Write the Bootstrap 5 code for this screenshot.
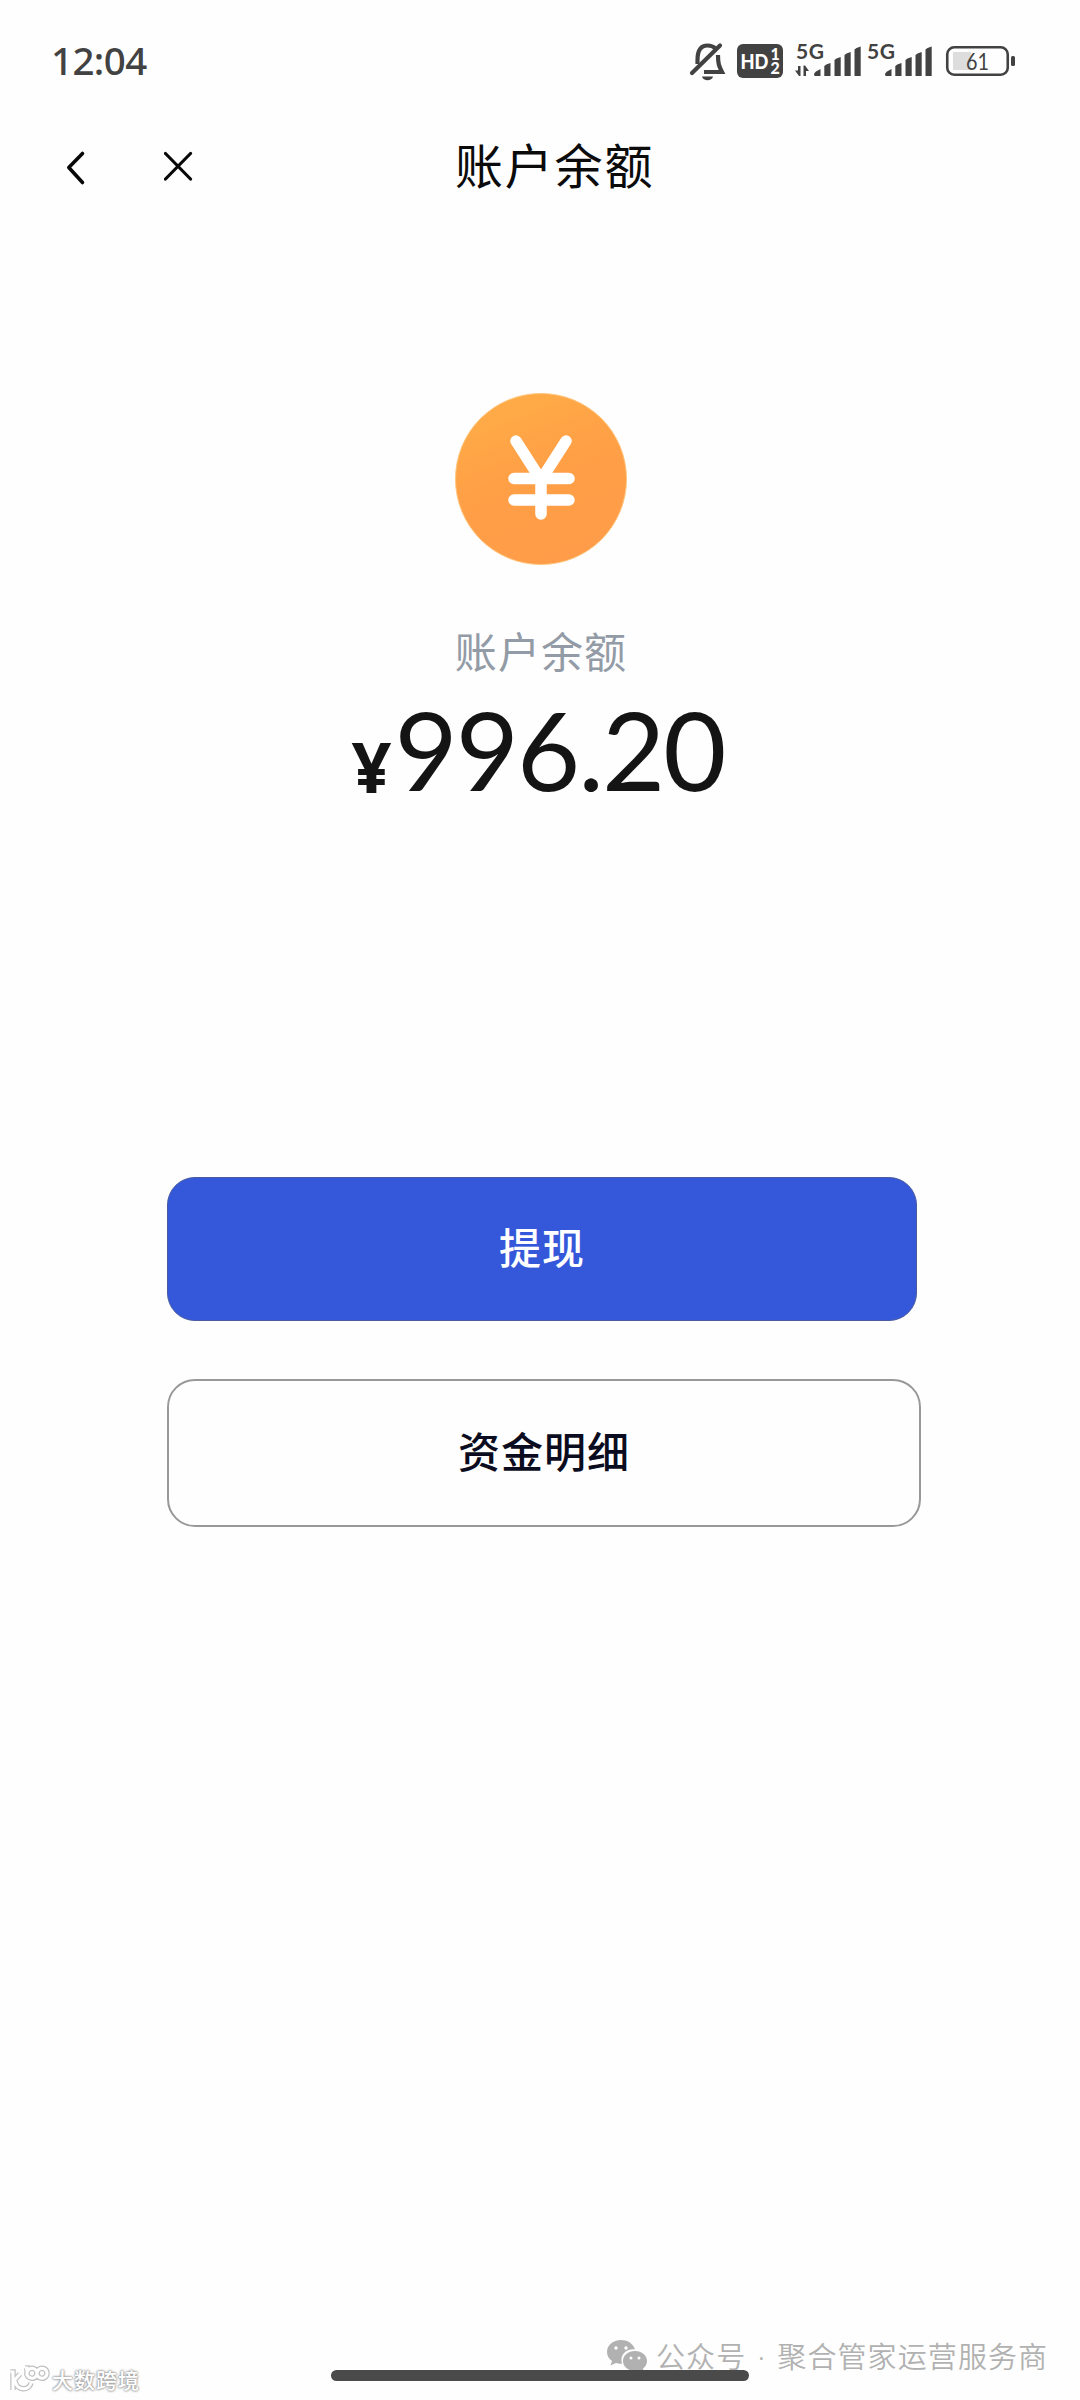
<!DOCTYPE html>
<html lang="zh-CN">
<head>
<meta charset="utf-8">
<meta name="viewport" content="width=device-width, initial-scale=1">
<title>账户余额</title>
<link href="https://cdn.jsdelivr.net/npm/bootstrap@5.3.0/dist/css/bootstrap.min.css" rel="stylesheet">
<style>
body{font-family:"Noto Sans CJK SC",sans-serif;background:#fefefe;color:#0d0d0d}
.phone{width:1080px;height:2400px;overflow:hidden}
.status{height:122px;padding:0 64px 0 51px;color:#424242}
.clock{font:500 38.5px/1 "Noto Sans",sans-serif;letter-spacing:-.6px;padding-bottom:2px}
.status svg,.topbar svg,.coin{display:block;flex:none}
.topbar{height:90px;padding-left:60px}
.topbar .btn{border-radius:0}
.close-btn{margin-left:70px}
.page-title{font-size:48px;line-height:60px;letter-spacing:1.8px;margin-left:257px;padding-bottom:8px;color:#0b0b0b;font-weight:400}
.coin{margin:181px 0 0 1px}
.label{font-size:42px;line-height:60px;letter-spacing:1.1px;margin:55px 0 0 2px;color:#929ba6}
.amount{height:110px;margin-top:14px;color:#141414;font-family:Lato,sans-serif;margin-right:4px}
.amount .yen{font:700 70px/1 "Noto Sans",sans-serif;margin-right:3px;padding-bottom:2px;align-self:flex-end;line-height:72px}
.amount .num{font-size:109px;line-height:110px;letter-spacing:-2px}
.actions{margin:373px 159px 0 167px}
.actions .btn{border-radius:28px;font-size:42px;font-weight:500;line-height:60px;letter-spacing:1px;padding:0 0 6px}
.btn-draw{width:750px;height:144px;background:#3558da;border:1px solid #4a5c9e;color:#fff}
.btn-list{width:754px;height:148px;margin-top:58px;border:2px solid #999;color:#0b0c20;background:#fefefe}
.account{left:606px;top:2335px;color:#b1b1b1;font-size:29px;line-height:40px;letter-spacing:1.1px;white-space:pre}
.acct{font-weight:350}
.dot{display:inline-block;width:31px;text-align:center;font-family:"Noto Sans",sans-serif}
.homebar{left:331px;top:2370px;width:418px;height:11px;border-radius:6px;background:#4a4a4a}
.source{left:8px;top:2364px;color:#fff;font-size:21px;line-height:30px;font-weight:500;letter-spacing:1px;text-shadow:0 0 2px #999,0 0 2px #999,0 0 3px #aaa}
</style>
</head>
<body>
<main class="phone position-relative d-flex flex-column">
  <header class="status d-flex align-items-center justify-content-between">
    <span class="clock">12:04</span>
    <svg width="328" height="56" viewBox="688 33 328 56" fill="#424242">
      <g fill="none" stroke="#424242" stroke-width="4.200">
        <path d="M697.500 64V60C697.500 50 701 45.500 707.500 45.500C711 45.500 713.500 46.500 715.500 48.500M718 55C718 64 719 66 722 72H704" />
        <path d="M692 73L720 45.500" stroke-linecap="round"/>
      </g>
      <path d="M702 76.500h11c-1 5-10 5-11 0z"/>
      <rect x="737" y="44" width="46" height="34" rx="6"/>
      <g fill="#fff" font-family="Lato" font-weight="900"><text x="740.500" y="68.500" font-size="20" textLength="28" lengthAdjust="spacingAndGlyphs">HD</text><text x="770.500" y="60" font-size="16">1</text><text x="770.500" y="74" font-size="16">2</text></g>
      <g font-family="Lato" font-weight="700" font-size="21"><text x="796" y="59" textLength="28">5G</text><text x="867" y="59" textLength="28">5G</text></g>
      <path d="M800.500 66v10h-1.500l-4-5.500h3V66zM803.500 76V65.500h1.500l4 5.500h-3V76z"/>
      <g id="bars"><path d="M814 74.500q0-1.500 2-3l4.500-2.500v7h-5q-1.500 0-1.500-1.500zM824.300 66l2-1.500 4.200-1.500v13h-6.200zM834.500 60l2-1.500 4.200-1.500v19h-6.200zM844.500 55l2-1.500 4.200-1.500v24h-6.200zM854.500 49.500l2-1.500 4.200-1.500v29.500h-6.200z"/></g>
      <use href="#bars" x="71"/>
      <rect x="953" y="52" width="18" height="18" fill="#ddd"/>
      <rect x="947.250" y="47.250" width="60.500" height="27.500" rx="7" fill="none" stroke="#424242" stroke-width="2.600"/>
      <rect x="1011" y="56" width="4" height="10" rx="1.500"/>
      <text x="966" y="70" font-family="Lato" font-size="24" textLength="23" lengthAdjust="spacingAndGlyphs">61</text>
    </svg>
  </header>
  <nav class="topbar d-flex align-items-center">
    <button class="btn p-0 border-0" aria-label="返回"><svg width="34" height="44" viewBox="60 145 34 44" fill="none" stroke="#080808" stroke-width="3.600" stroke-linecap="round" stroke-linejoin="round"><path d="M82.500 153.500L68.800 167.500L82.500 182.500"/></svg></button>
    <button class="btn p-0 border-0 close-btn" aria-label="关闭"><svg width="34" height="44" viewBox="164 145 34 44" fill="none" stroke="#080808" stroke-width="3.200" stroke-linecap="round"><path d="M165.500 153.500L190.500 179M190.500 153.500L165.500 179"/></svg></button>
    <h1 class="page-title mb-0">账户余额</h1>
  </nav>
  <section class="d-flex flex-column align-items-center">
    <svg class="coin" width="172" height="172" viewBox="0 0 172 172">
      <defs><linearGradient id="gold" x1=".2" y1="0" x2=".6" y2="1"><stop stop-color="#ffad47"/><stop offset=".5" stop-color="#ff9f46"/><stop offset="1" stop-color="#ff9c49"/></linearGradient></defs>
      <circle cx="86" cy="86" r="85.500" fill="url(#gold)" stroke="#ffc57c"/>
      <path d="M61 48L86 87L111 48M59 85.500H114M59 107H114M86 86V121" fill="none" stroke="#fff" stroke-width="11.500" stroke-linecap="round" stroke-linejoin="round"/>
    </svg>
    <div class="label">账户余额</div>
    <div class="amount d-flex align-items-baseline"><span class="yen">¥</span><span class="num">996.20</span></div>
  </section>
  <section class="actions d-flex flex-column">
    <button class="btn btn-draw">提现</button>
    <button class="btn btn-list">资金明细</button>
  </section>
  <div class="account position-absolute d-flex align-items-center">
    <svg class="me-2" width="42" height="34" viewBox="0 0 42 34" fill="#b1b1b1"><path d="M15 1C7 1 1 6 1 13c0 4 2 7 5 9l-1.500 4.500L10 24c2 .7 4 1 6 .7C13 14 23 9 29 10.500C27 4 21 1 15 1z"/><path d="M29 12c-7 0-12 4.500-12 10s5 10 12 10c1.500 0 3-.2 4.500-.7L38 33.500l-1-4c2.500-2 4-4.500 4-7.500c0-5.500-5-10-12-10z"/><g fill="#fff"><circle cx="10" cy="9" r="1.700"/><circle cx="20" cy="9" r="1.700"/><circle cx="25" cy="19" r="1.500"/><circle cx="33" cy="19" r="1.500"/></g></svg>
    <span class="acct">公众号<span class="dot">·</span>聚合管家运营服务商</span>
  </div>
  <div class="homebar position-absolute"></div>
  <div class="source position-absolute d-flex align-items-center">
    <svg width="44" height="30" viewBox="8 2364 44 30" fill="none"><g stroke="#c2c2c2" stroke-width="5.500"><path id="loop" d="M10.500 2372H13V2390M13 2382L20 2374M15 2381C17 2391 29 2391 31 2383M25 2368H27V2376M27 2373a5 5 0 1 1 0 .5M37 2373a5 5 0 1 1 0 .5"/></g><use href="#loop" stroke="#fff" stroke-width="3"/></svg>
    <span>大数跨境</span>
  </div>
</main>
<script src="https://cdn.jsdelivr.net/npm/bootstrap@5.3.0/dist/js/bootstrap.bundle.min.js"></script>
</body>
</html>
